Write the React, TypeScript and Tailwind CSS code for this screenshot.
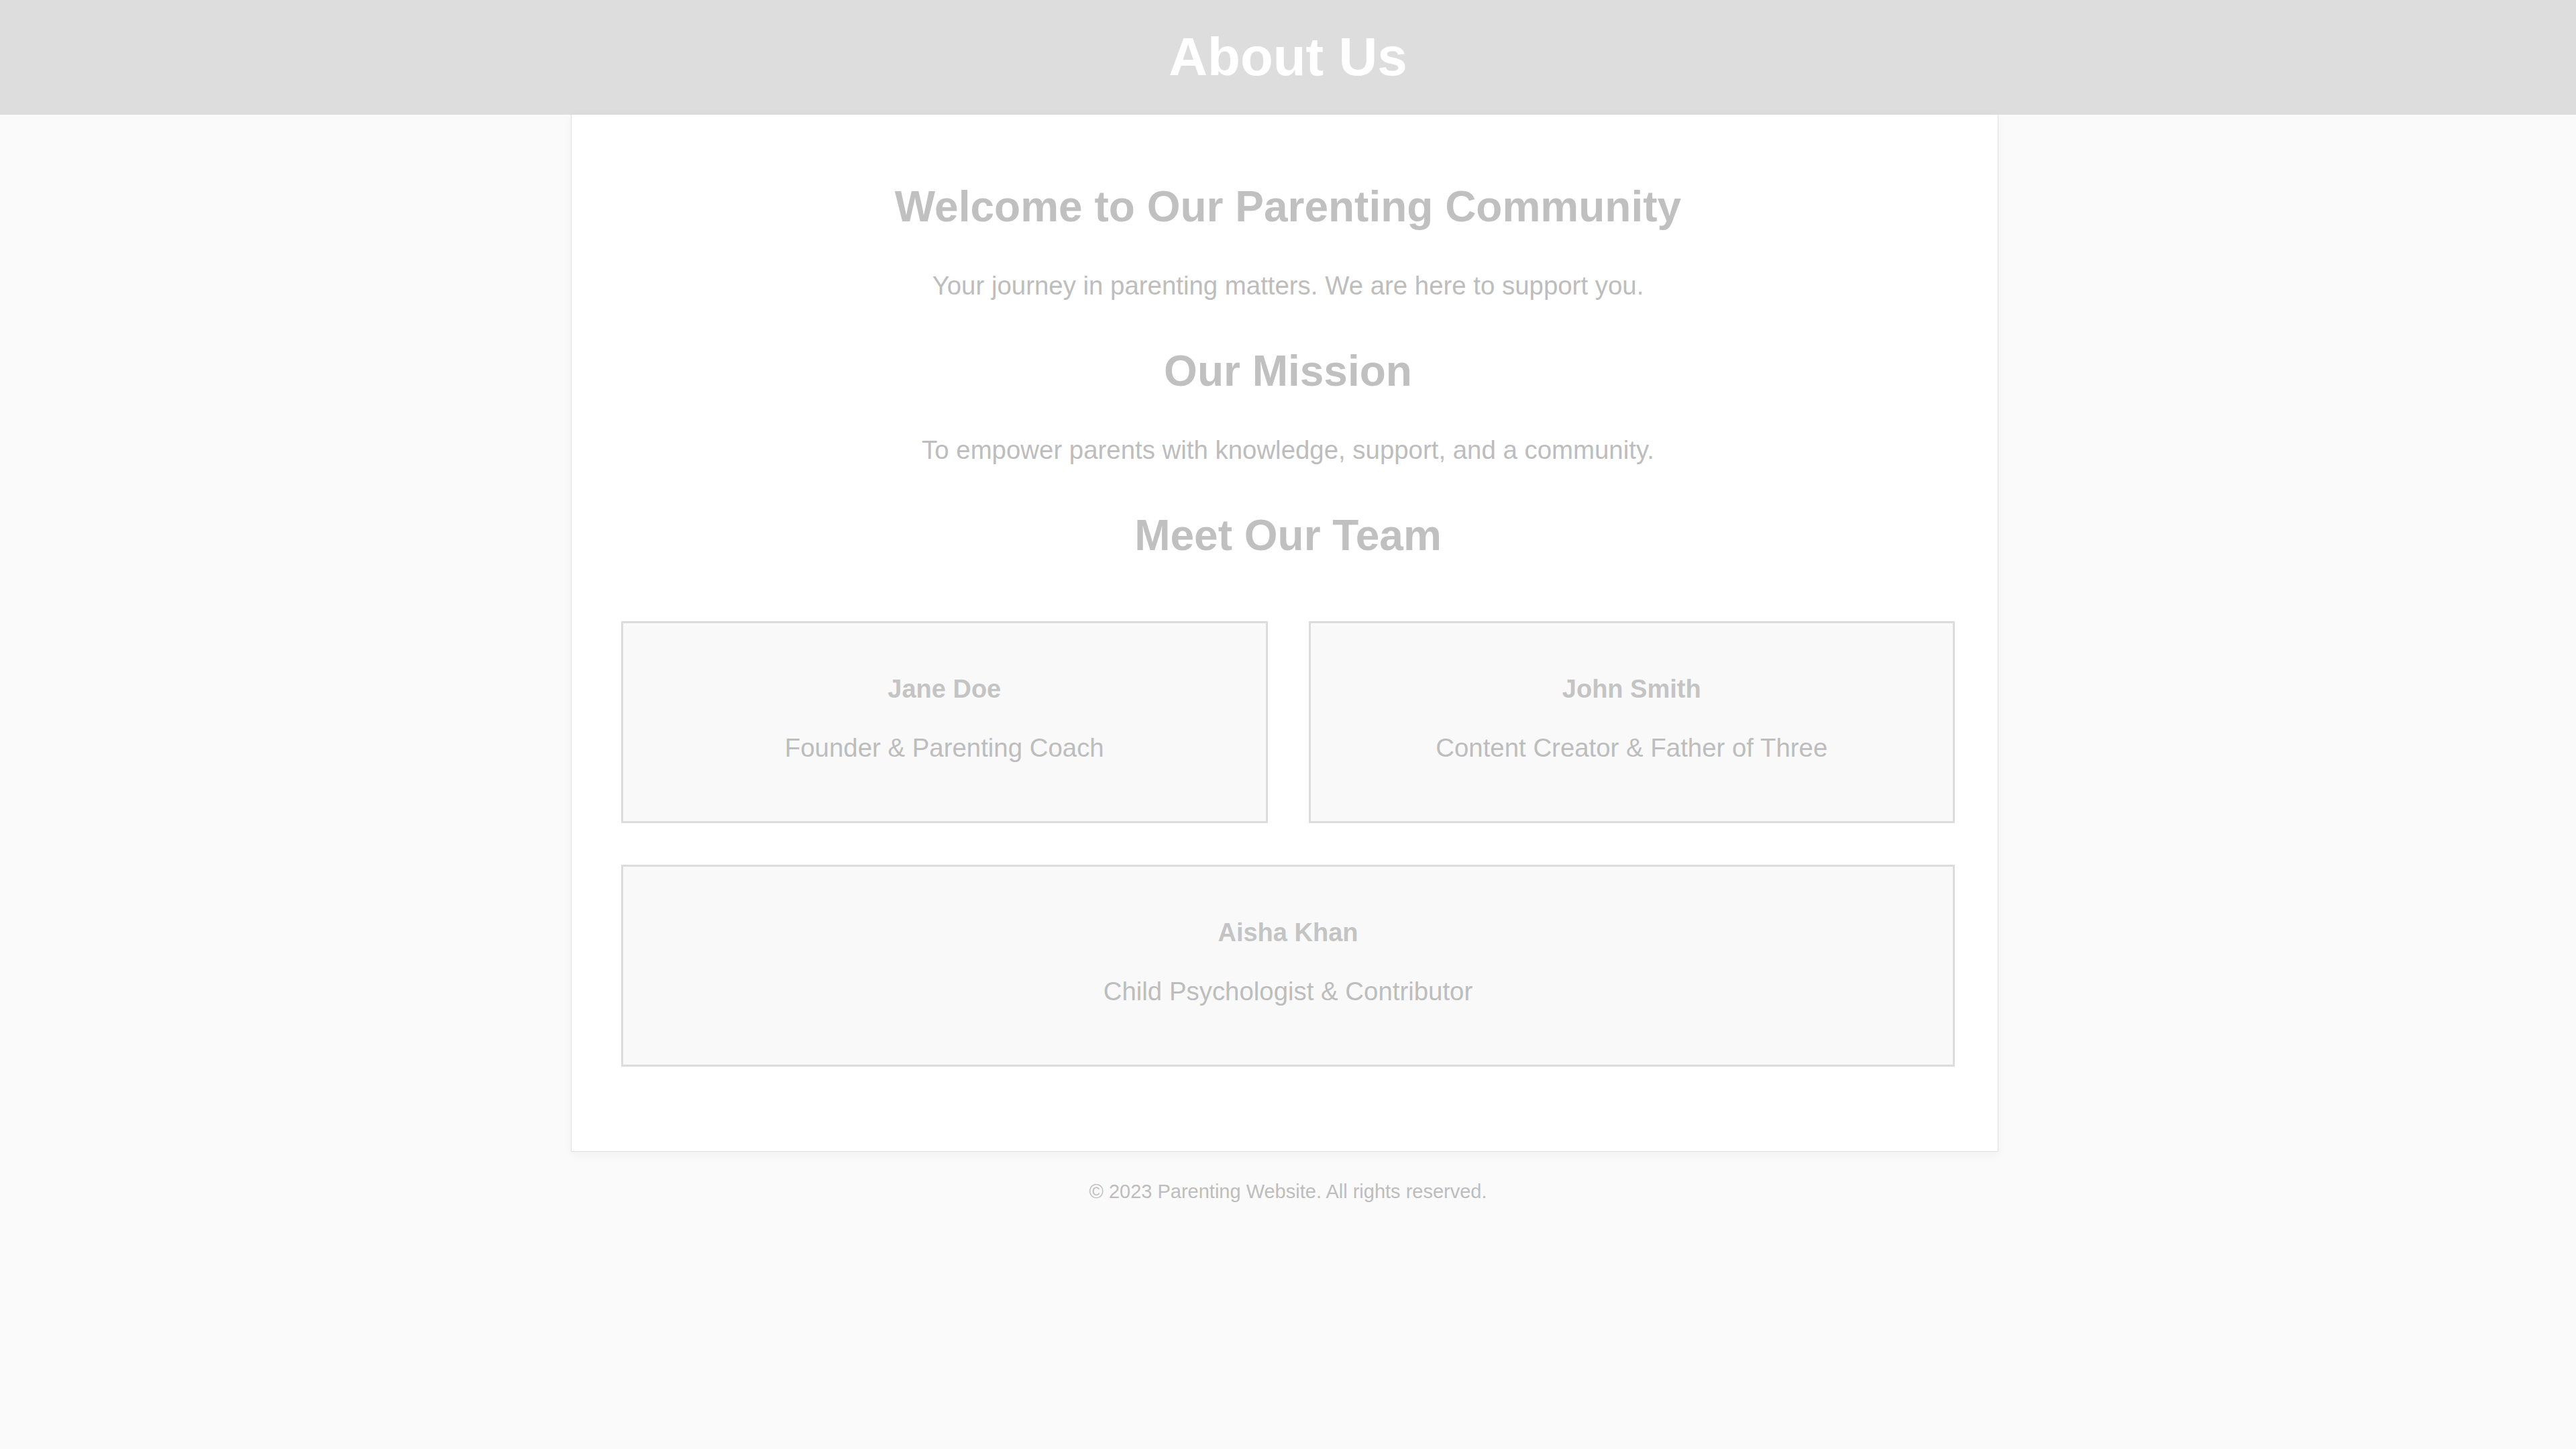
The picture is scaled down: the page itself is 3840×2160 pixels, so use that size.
const team = [
  { name: 'Jane Doe', role: 'Founder & Parenting Coach' },
  { name: 'John Smith', role: 'Content Creator & Father of Three' },
  { name: 'Aisha Khan', role: 'Child Psychologist & Contributor' },
]

function TeamCard({ name, role, wide }: { name: string; role: string; wide?: boolean }) {
  return (
    <div
      className={`h-[301px] pt-[76px] bg-[#f9f9f9] border-[3px] border-[#dcdcdc] text-center ${wide ? 'col-span-2' : ''}`}
    >
      <h3 className="text-[38px] leading-[44px] font-bold text-[#c4c4c4]">{name}</h3>
      <p className="mt-[44px] text-[38.4px] leading-[44px] text-[#bdbdbd]">{role}</p>
    </div>
  )
}

export default function App() {
  return (
    <div className="min-h-screen bg-[#fafafa] font-['Liberation_Sans',Arial,sans-serif]">
      {/* Header */}
      <header className="h-[171px] bg-[#dddddd] flex items-center justify-center pb-[2px]">
        <h1 className="text-[80px] leading-none font-bold text-white">About Us</h1>
      </header>

      {/* Main card */}
      <div className="pr-[10px]">
        <main className="w-[2128px] mx-auto bg-white border border-t-0 border-[#e0e0e0] shadow-[0_4px_14px_rgba(0,0,0,0.04)] pl-[74px] pr-[64px] pt-[100px] pb-[126px] text-center">
          <h2 className="text-[64px] leading-[74px] font-bold text-[#c0c0c0]">Welcome to Our Parenting Community</h2>
          <p className="mt-[59px] text-[38.4px] leading-[44px] text-[#bdbdbd]">
            Your journey in parenting matters. We are here to support you.
          </p>

          <h2 className="mt-[68px] text-[64px] leading-[74px] font-bold text-[#c0c0c0]">Our Mission</h2>
          <p className="mt-[59px] text-[38.4px] leading-[44px] text-[#bdbdbd]">
            To empower parents with knowledge, support, and a community.
          </p>

          <h2 className="mt-[68px] text-[64px] leading-[74px] font-bold text-[#c0c0c0]">Meet Our Team</h2>

          <div className="mt-[91px] grid grid-cols-2 gap-x-[61px] gap-y-[62px]">
            {team.map((m, i) => (
              <TeamCard key={m.name} name={m.name} role={m.role} wide={i === 2} />
            ))}
          </div>
        </main>
      </div>

      {/* Footer */}
      <footer className="mt-[42px] text-center text-[29px] leading-[34px] text-[#bdbdbd]">
        © 2023 Parenting Website. All rights reserved.
      </footer>
    </div>
  )
}
